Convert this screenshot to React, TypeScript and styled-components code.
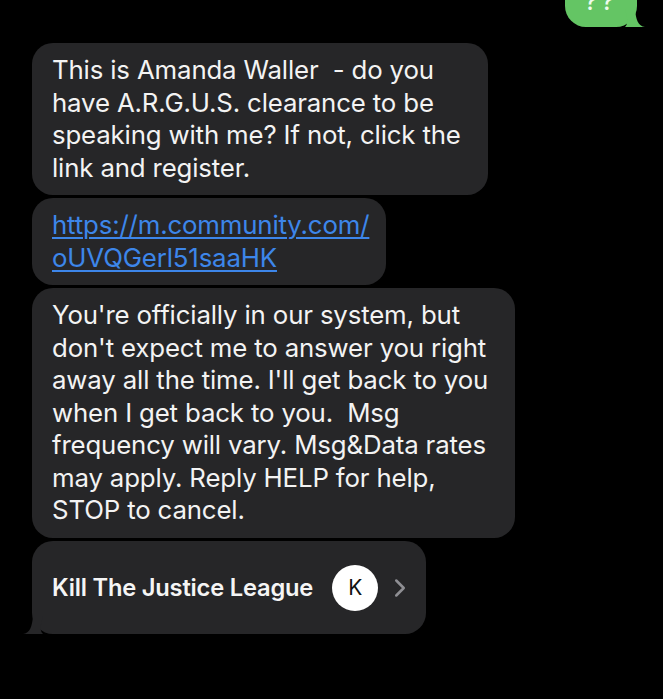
import React from 'react';
import styled, { createGlobalStyle } from 'styled-components';
import { ChevronRight } from 'lucide-react';

const GlobalStyle = createGlobalStyle`
  html, body {
    margin: 0;
    padding: 0;
    background: #000;
  }
  body {
    font-family: Inter, "Noto Sans", "Liberation Sans", sans-serif;
    -webkit-font-smoothing: antialiased;
  }
`;

const Screen = styled.div`
  width: 663px;
  height: 699px;
  background: #000;
  overflow: hidden;
  display: flex;
  flex-direction: column;
`;

const OutgoingRow = styled.div`
  display: flex;
  justify-content: flex-end;
  padding-right: 26px;
  margin-top: -30px;
`;

const GreenBubble = styled.div`
  position: relative;
  width: 72px;
  height: 57px;
  border-radius: 21px;
  background: #64c564;
  color: #eefbee;
  font-size: 24px;
  font-weight: 500;
  display: flex;
  justify-content: center;
  align-items: center;
  letter-spacing: 4px;
  padding-top: 5px;
  box-sizing: border-box;
`;

const Thread = styled.div`
  display: flex;
  flex-direction: column;
  align-items: flex-start;
  gap: 3px;
  padding: 16px 0 0 32px;
`;

const Bubble = styled.div<{ $w: number }>`
  position: relative;
  width: ${(p) => p.$w}px;
  box-sizing: border-box;
  background: #262628;
  border-radius: 21px;
  padding: 11px 0 11px 20px;
  color: #f3f3f3;
  font-size: 25.8px;
  line-height: 32.5px;
  letter-spacing: -0.15px;
  white-space: nowrap;
`;

const Link = styled.a`
  color: #3d86ea;
  text-decoration: underline;
  text-underline-offset: 3px;
  text-decoration-thickness: 1.5px;
`;

const CardBubble = styled(Bubble)`
  height: 93px;
  padding: 0 0 0 20px;
  display: flex;
  align-items: center;
`;

const CardTitle = styled.span`
  font-size: 23.7px;
  font-weight: 600;
  letter-spacing: -0.2px;
  color: #f5f5f5;
  padding-top: 2px;
`;

const Avatar = styled.div`
  width: 46px;
  height: 46px;
  border-radius: 50%;
  background: #fff;
  color: #111;
  font-size: 21px;
  display: flex;
  align-items: center;
  justify-content: center;
  margin-left: 19px;
  margin-top: 2px;
`;

const Chevron = styled(ChevronRight)`
  color: #8e8e93;
  margin-left: 7px;
  margin-top: 2px;
`;

const TailLeft = styled.svg`
  position: absolute;
  left: -9px;
  bottom: 0;
`;

const TailRight = styled.svg`
  position: absolute;
  right: -8px;
  bottom: 0;
`;

export default function App() {
  return (
    <Screen>
      <GlobalStyle />
      <OutgoingRow>
        <GreenBubble>
          ??
          <TailRight width="20" height="18" viewBox="0 0 20 18">
            <path d="M0 0 C2 8 4 14 0 18 L20 18 C13 17 11 11 10 0 Z" fill="#64c564" />
          </TailRight>
        </GreenBubble>
      </OutgoingRow>
      <Thread>
        <Bubble $w={456}>
          This is Amanda Waller&nbsp; - do you
          <br />
          have A.R.G.U.S. clearance to be
          <br />
          speaking with me? If not, click the
          <br />
          link and register.
        </Bubble>
        <Bubble $w={354}>
          <Link href="#">
            https://m.community.com/
            <br />
            oUVQGerl51saaHK
          </Link>
        </Bubble>
        <Bubble $w={483}>
          You're officially in our system, but
          <br />
          don't expect me to answer you right
          <br />
          away all the time. I'll get back to you
          <br />
          when I get back to you.&nbsp; Msg
          <br />
          frequency will vary. Msg&amp;Data rates
          <br />
          may apply. Reply HELP for help,
          <br />
          STOP to cancel.
        </Bubble>
        <CardBubble $w={394}>
          <CardTitle>Kill The Justice League</CardTitle>
          <Avatar>K</Avatar>
          <Chevron size={30} strokeWidth={2} />
          <TailLeft width="20" height="18" viewBox="0 0 20 18">
            <path d="M20 0 C18 8 16 14 20 18 L0 18 C7 17 9 11 10 0 Z" fill="#262628" />
          </TailLeft>
        </CardBubble>
      </Thread>
    </Screen>
  );
}
